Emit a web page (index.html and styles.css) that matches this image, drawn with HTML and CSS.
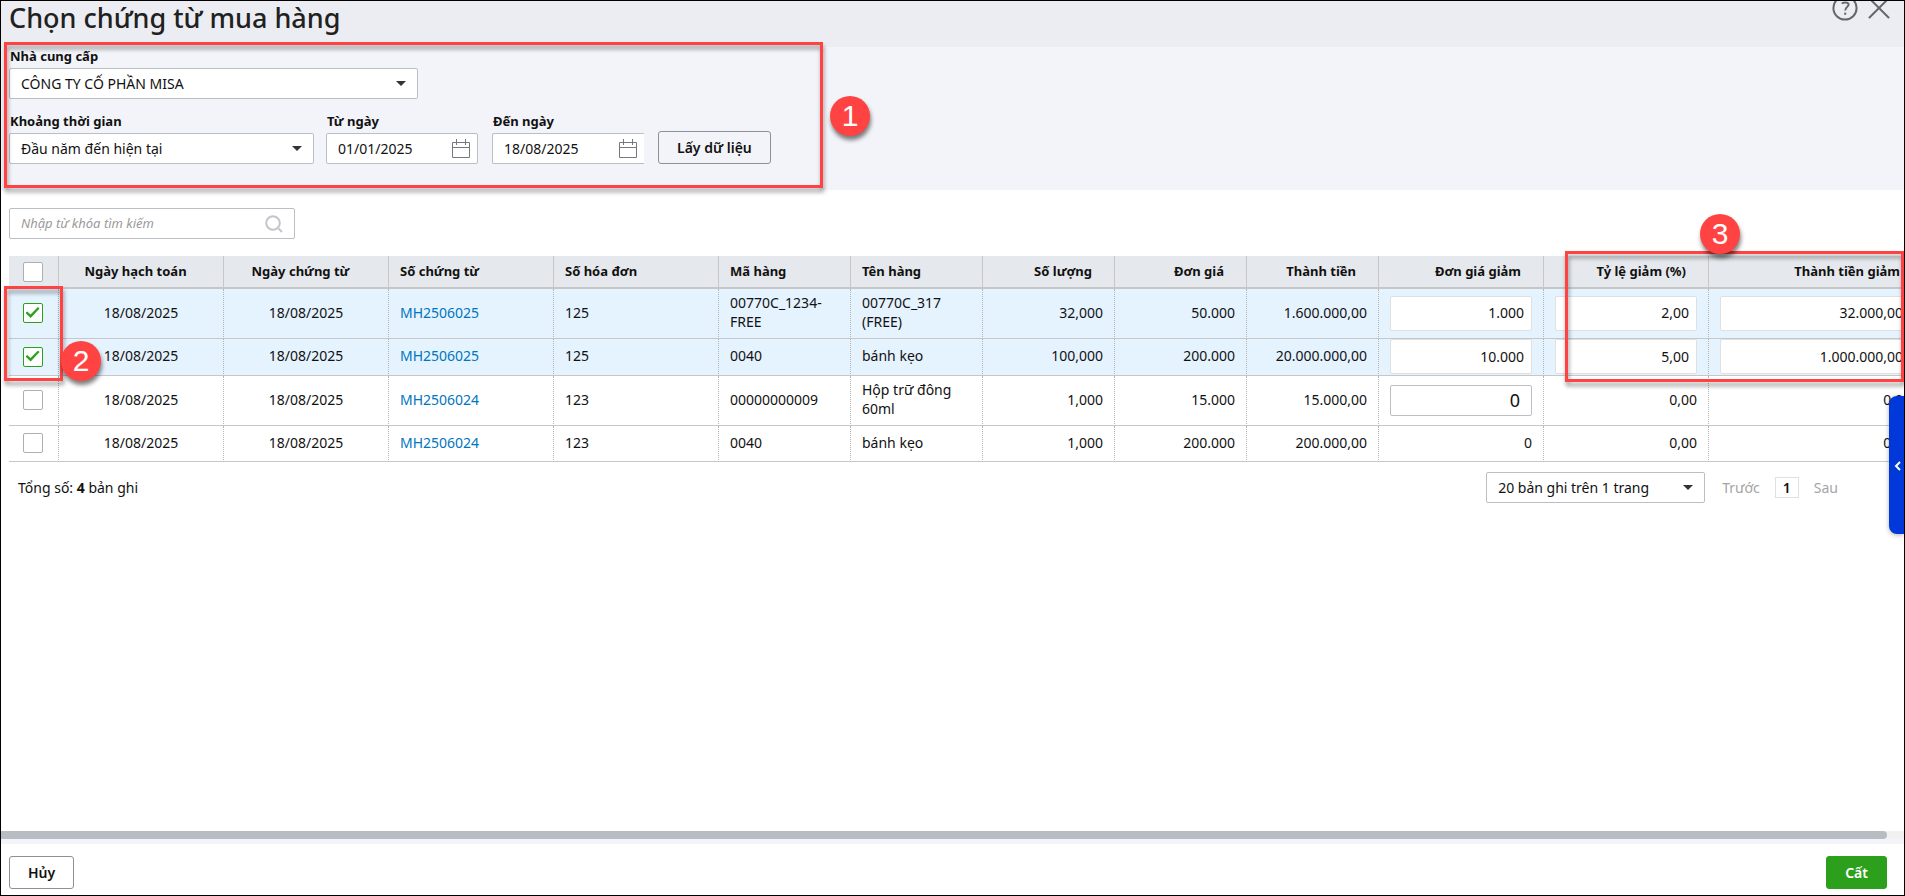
FILE: index.html
```html
<!DOCTYPE html>
<html lang="vi">
<head>
    <meta charset="UTF-8">
    <meta name="viewport" content="width=device-width, initial-scale=1.0">
    <title>Chọn chứng từ mua hàng</title>
    <link rel="stylesheet" href="styles.css">
</head>
<body>
    <div class="dialog">
        <header class="dialog-header">
            <h1>Chọn chứng từ mua hàng</h1>
            <div class="header-actions">
                <button type="button" class="icon-btn" aria-label="Trợ giúp">
                    <svg width="26" height="26" viewBox="0 0 26 26" fill="none" stroke="#66676c" stroke-width="2">
                        <circle cx="13" cy="13" r="11.6"/>
                        <path d="M9.8 8.6c1-1.3 5.800-2 6.800.4.8 2.200-3.400 3.400-3.400 6.400"/>
                        <path d="M13.200 17.600v2.200"/>
                    </svg>
                </button>
                <button type="button" class="icon-btn" aria-label="Đóng">
                    <svg width="22" height="26" viewBox="0 0 22 26" fill="none" stroke="#66676c" stroke-width="2" stroke-linecap="round">
                        <path d="M1.500 3.500l19 19M20.500 3.500l-19 19"/>
                    </svg>
                </button>
            </div>
        </header>

        <section class="filter">
            <div class="field supplier">
                <label for="supplier">Nhà cung cấp</label>
                <div class="select">
                    <select id="supplier"><option>CÔNG TY CỔ PHẦN MISA</option></select>
                </div>
            </div>
            <div class="filter-row">
                <div class="field period">
                    <label for="period">Khoảng thời gian</label>
                    <div class="select">
                        <select id="period"><option>Đầu năm đến hiện tại</option></select>
                    </div>
                </div>
                <div class="field date">
                    <label for="from">Từ ngày</label>
                    <div class="date-box">
                        <input type="text" id="from" value="01/01/2025">
                        <svg width="20" height="20" viewBox="0 0 20 20" fill="none" stroke="#77787d"><path d="M1.500 3.500h17v15h-17zM1.500 8.500h17M5.500 0v6M14.500 0v6"/></svg>
                    </div>
                </div>
                <div class="field date">
                    <label for="to">Đến ngày</label>
                    <div class="date-box open">
                        <input type="text" id="to" value="18/08/2025">
                        <svg width="20" height="20" viewBox="0 0 20 20" fill="none" stroke="#77787d"><path d="M1.500 3.500h17v15h-17zM1.500 8.500h17M5.500 0v6M14.500 0v6"/></svg>
                    </div>
                </div>
                <button type="button" class="btn load-btn">Lấy dữ liệu</button>
            </div>
            <div class="mark mark-filter"></div>
            <span class="step step-1">1</span>
        </section>

        <main class="content">
            <div class="search">
                <input type="text" placeholder="Nhập từ khóa tìm kiếm" aria-label="Tìm kiếm">
                <svg width="18" height="18" viewBox="0 0 18 18" fill="none" stroke="#c4c5c8" stroke-width="2"><circle cx="8" cy="8" r="6.800"/><path d="M13.500 13.500l3.500 3.500"/></svg>
            </div>

            <div class="grid">
                <div class="table-wrap">
                    <table>
                        <colgroup>
                            <col class="w-check">
                            <col class="w-l"><col class="w-l"><col class="w-l"><col class="w-l">
                            <col class="w-m"><col class="w-m"><col class="w-m"><col class="w-m"><col class="w-m">
                            <col class="w-l"><col class="w-l"><col class="w-xl">
                        </colgroup>
                        <thead>
                            <tr>
                                <th class="center check"><input type="checkbox" aria-label="Chọn tất cả"></th>
                                <th class="center">Ngày hạch toán</th>
                                <th class="center">Ngày chứng từ</th>
                                <th>Số chứng từ</th>
                                <th>Số hóa đơn</th>
                                <th>Mã hàng</th>
                                <th>Tên hàng</th>
                                <th class="num">Số lượng</th>
                                <th class="num">Đơn giá</th>
                                <th class="num">Thành tiền</th>
                                <th class="num">Đơn giá giảm</th>
                                <th class="num">Tỷ lệ giảm (%)</th>
                                <th class="num">Thành tiền giảm</th>
                            </tr>
                        </thead>
                        <tbody>
                            <tr class="selected tall">
                                <td class="center check"><input type="checkbox" aria-label="Chọn dòng 1" checked></td>
                                <td class="center">18/08/2025</td>
                                <td class="center">18/08/2025</td>
                                <td><a href="#">MH2506025</a></td>
                                <td>125</td>
                                <td>00770C_1234-FREE</td>
                                <td>00770C_317 (FREE)</td>
                                <td class="num">32,000</td>
                                <td class="num">50.000</td>
                                <td class="num">1.600.000,00</td>
                                <td class="edit"><input type="text" class="cell-input" aria-label="Đơn giá giảm" value="1.000"></td>
                                <td class="edit"><input type="text" class="cell-input" aria-label="Tỷ lệ giảm" value="2,00"></td>
                                <td class="edit"><input type="text" class="cell-input" aria-label="Thành tiền giảm" value="32.000,00"></td>
                            </tr>
                            <tr class="selected">
                                <td class="center check"><input type="checkbox" aria-label="Chọn dòng 2" checked></td>
                                <td class="center">18/08/2025</td>
                                <td class="center">18/08/2025</td>
                                <td><a href="#">MH2506025</a></td>
                                <td>125</td>
                                <td>0040</td>
                                <td>bánh kẹo</td>
                                <td class="num">100,000</td>
                                <td class="num">200.000</td>
                                <td class="num">20.000.000,00</td>
                                <td class="edit"><input type="text" class="cell-input" aria-label="Đơn giá giảm" value="10.000"></td>
                                <td class="edit"><input type="text" class="cell-input" aria-label="Tỷ lệ giảm" value="5,00"></td>
                                <td class="edit"><input type="text" class="cell-input" aria-label="Thành tiền giảm" value="1.000.000,00"></td>
                            </tr>
                            <tr class="tall">
                                <td class="center check"><input type="checkbox" aria-label="Chọn dòng 3"></td>
                                <td class="center">18/08/2025</td>
                                <td class="center">18/08/2025</td>
                                <td><a href="#">MH2506024</a></td>
                                <td>123</td>
                                <td>00000000009</td>
                                <td>Hộp trữ đông 60ml</td>
                                <td class="num">1,000</td>
                                <td class="num">15.000</td>
                                <td class="num">15.000,00</td>
                                <td class="edit"><input type="text" class="cell-input editing" aria-label="Đơn giá giảm" value="0"></td>
                                <td class="num">0,00</td>
                                <td class="num">0,00</td>
                            </tr>
                            <tr>
                                <td class="center check"><input type="checkbox" aria-label="Chọn dòng 4"></td>
                                <td class="center">18/08/2025</td>
                                <td class="center">18/08/2025</td>
                                <td><a href="#">MH2506024</a></td>
                                <td>123</td>
                                <td>0040</td>
                                <td>bánh kẹo</td>
                                <td class="num">1,000</td>
                                <td class="num">200.000</td>
                                <td class="num">200.000,00</td>
                                <td class="num">0</td>
                                <td class="num">0,00</td>
                                <td class="num">0,00</td>
                            </tr>
                        </tbody>
                    </table>
                </div>
                <div class="mark mark-check"></div>
                <span class="step step-2">2</span>
                <div class="mark mark-discount"></div>
                <span class="step step-3">3</span>
                <button type="button" class="side-tab" aria-label="Mở rộng">
                    <svg width="8" height="10" viewBox="0 0 8 10" fill="none" stroke="#fff" stroke-width="2"><path d="M6 1L2 5l4 4"/></svg>
                </button>
            </div>

            <div class="paging">
                <div>Tổng số: <b>4</b> bản ghi</div>
                <div class="pager">
                    <div class="select page-size">
                        <select aria-label="Số bản ghi trên trang"><option>20 bản ghi trên 1 trang</option></select>
                    </div>
                    <button type="button" class="page-link" disabled>Trước</button>
                    <span class="page-current">1</span>
                    <button type="button" class="page-link" disabled>Sau</button>
                </div>
            </div>
        </main>

        <div class="scrollbar"><div class="thumb"></div></div>

        <footer class="dialog-footer">
            <button type="button" class="btn">Hủy</button>
            <button type="button" class="btn primary">Cất</button>
        </footer>
    </div>
</body>
</html>
```
FILE: styles.css
```css
* {
    box-sizing: border-box;
}
body {
    margin: 0;
    font-family: "Noto Sans", sans-serif;
    font-size: 14px;
    line-height: 19px;
    color: #111;
}
input, select, button {
    font: inherit;
    color: inherit;
}
.dialog {
    display: flex;
    flex-direction: column;
    height: 100vh;
    border: 1px solid #000;
    background: #fff;
    overflow: hidden;
}

/* header */
.dialog-header {
    display: flex;
    justify-content: space-between;
    height: 46px;
    padding: 0 14px 0 8px;
    background: #ecedf2;
}
.dialog-header h1 {
    margin: 0;
    font-size: 27px;
    line-height: 34px;
    font-weight: 500;
    color: #212121;
}
.header-actions {
    display: flex;
    gap: 10px;
    height: 26px;
    margin-top: -6px;
}
.icon-btn {
    padding: 0;
    border: 0;
    background: none;
}
.icon-btn svg {
    display: block;
}

/* filter */
.filter {
    position: relative;
    height: 143px;
    padding: 0 8px;
    background: #f3f4f9;
}
.filter-row {
    display: flex;
    align-items: flex-end;
    margin-top: 13px;
}
.field label {
    display: block;
    margin-bottom: 2px;
    padding-left: 1px;
    font-size: 13px;
    font-weight: 700;
}
.supplier {
    width: 409px;
}
.period {
    width: 305px;
    margin-right: 12px;
}
.date {
    width: 152px;
    margin-right: 14px;
}
.select {
    position: relative;
}
.select select {
    display: block;
    width: 100%;
    height: 31px;
    padding: 0 30px 0 11px;
    border: 1px solid #babec5;
    border-radius: 2px;
    background: #fff;
    appearance: none;
}
.select::after {
    content: "";
    position: absolute;
    right: 12px;
    top: 13px;
    border: 5px solid transparent;
    border-top-color: #333;
    border-bottom: 0;
    pointer-events: none;
}
.date-box {
    display: flex;
    align-items: center;
    height: 31px;
    padding: 0 6px 0 11px;
    border: 1px solid #babec5;
    border-radius: 2px;
    background: #fff;
}
.date-box.open {
    border-right: 0;
    border-radius: 2px 0 0 2px;
}
.date-box input {
    flex: 1;
    width: 0;
    padding: 0;
    border: 0;
    outline: none;
}
.btn {
    height: 33px;
    padding: 0 18px;
    border: 1px solid #8d9096;
    border-radius: 3px;
    background: transparent;
    font-weight: 600;
}
.btn.primary {
    border-color: #2ca01c;
    background: #2ca01c;
    color: #fff;
}

/* content */
.content {
    flex: 1;
    padding: 18px 0 0 8px;
}
.search {
    display: flex;
    align-items: center;
    width: 286px;
    height: 31px;
    padding: 0 11px;
    border: 1px solid #babec5;
    border-radius: 2px;
}
.search input {
    flex: 1;
    padding: 0;
    border: 0;
    outline: none;
    font-size: 13px;
}
.search input::placeholder {
    color: #9a9a9a;
    font-style: italic;
}
.grid {
    position: relative;
    margin-top: 17px;
}
.table-wrap {
    overflow: hidden;
}
table {
    width: 1914px;
    table-layout: fixed;
    border-collapse: separate;
    border-spacing: 0;
}
.w-check {
    width: 50px;
}
.w-l {
    width: 165px;
}
.w-m {
    width: 132px;
}
.w-xl {
    width: 214px;
}
th {
    height: 33px;
    padding: 0 22px 0 11px;
    border-right: 1px solid #c7c7c7;
    border-bottom: 2px solid #c7c7c7;
    background: #e5e8ec;
    font-size: 13px;
    font-weight: 700;
    text-align: left;
    white-space: nowrap;
}
td {
    height: 36px;
    padding: 0 11px 3px;
    border-right: 1px dotted #b5b5b5;
    border-bottom: 1px solid #c7c7c7;
}
.tall td {
    height: 50px;
}
td.edit, td.check {
    padding-bottom: 1px;
}
.selected td {
    background: #e5f3ff;
}
.center {
    text-align: center;
}
.num {
    text-align: right;
}
.check {
    padding-left: 0;
    padding-right: 2px;
}
td a {
    color: #0075c0;
    text-decoration: none;
}
input[type="checkbox"] {
    display: block;
    width: 20px;
    height: 20px;
    margin: 0 auto;
    border: 1px solid #afafaf;
    border-radius: 2px;
    background: #fff;
    appearance: none;
}
input[type="checkbox"]:checked {
    border-color: #2ca01c;
}
input[type="checkbox"]:checked::after {
    content: "";
    display: block;
    width: 14px;
    height: 11px;
    margin: 3px 0 0 2px;
    background: #2ca01c;
    clip-path: polygon(0 55%, 12% 41%, 36% 69%, 89% 0, 100% 14%, 37% 100%);
}
.cell-input {
    display: block;
    width: 100%;
    height: 35px;
    padding: 0 7px 1px;
    border: 1px solid #e0e0e0;
    border-radius: 2px;
    background: #fff;
    text-align: right;
}
.cell-input.editing {
    height: 31px;
    padding: 0 11px;
    border-color: #babec5;
    font-size: 18px;
}

/* paging */
.paging {
    display: flex;
    justify-content: space-between;
    align-items: center;
    height: 51px;
    padding: 0 66px 0 9px;
}
.pager {
    display: flex;
    align-items: center;
}
.page-size {
    width: 219px;
    margin-right: 17px;
}
.page-link {
    padding: 0;
    border: 0;
    background: none;
    color: #a5a5a5;
}
.page-current {
    width: 24px;
    margin: 0 15px;
    border: 1px solid #e0e0e0;
    font-weight: 600;
    text-align: center;
}
.scrollbar {
    height: 13px;
    border-bottom: 5px solid #f3f4f9;
    background: #f1f1f1;
}
.thumb {
    height: 8px;
    margin-right: 17px;
    border-radius: 0 4px 4px 0;
    background: #b8bcc3;
}
.dialog-footer {
    display: flex;
    justify-content: space-between;
    padding: 12px 17px 6px 8px;
}

/* guide marks */
.mark {
    position: absolute;
    border: 3px solid #ff4343;
    filter: drop-shadow(1px 4px 2px rgba(0, 0, 0, 0.4));
    pointer-events: none;
}
.mark-filter {
    left: 3px;
    top: -5px;
    width: 819px;
    height: 146px;
}
.mark-check {
    left: -5px;
    top: 30px;
    width: 59px;
    height: 95px;
}
.mark-discount {
    left: 1556px;
    right: 0;
    top: -5px;
    height: 131px;
}
.step {
    position: absolute;
    width: 40px;
    height: 40px;
    border-radius: 50%;
    background: #ff4343;
    box-shadow: 1px 4px 4px rgba(0, 0, 0, 0.5);
    color: #fff;
    font-family: "Liberation Sans", sans-serif;
    font-size: 30px;
    line-height: 40px;
    text-align: center;
}
.step-1 {
    left: 829px;
    top: 49px;
}
.step-2 {
    left: 52px;
    top: 85px;
}
.step-3 {
    left: 1691px;
    top: -42px;
}
.side-tab {
    position: absolute;
    right: 0;
    top: 140px;
    width: 15px;
    height: 138px;
    padding: 0 0 0 3px;
    border: 0;
    border-radius: 8px 0 0 8px;
    background: #0038d9;
    box-shadow: 0 1px 5px rgba(0, 0, 0, 0.3);
}
```
